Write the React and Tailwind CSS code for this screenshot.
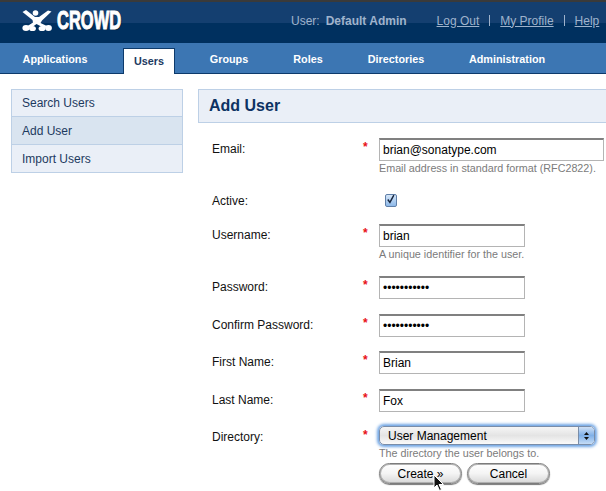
import React from "react";

function Row({ label, required, h, children }) {
  return (
    <div className={`relative flex ${h}`}>
      <div className="w-[167px] pl-[14px] pt-[4px] text-[12px] leading-[15px] text-[#111]">{label}</div>
      <div className="w-[27px] -ml-[2px] pt-[2px] text-[12px] leading-[14px] font-bold text-[#e8101a]">
        <span className={required ? "" : "invisible"}>*</span>
      </div>
      <div className="flex-1 min-w-0 -ml-[11px]">{children}</div>
    </div>
  );
}

const Input = ({ value, wide, password }) => (
  <input
    readOnly
    type={password ? "password" : "text"}
    value={value}
    className={`block h-[23px] ${wide ? "w-[225px]" : "w-[146px]"} border border-[#b4b4b4] border-t-[#808080] border-t-2 bg-white px-[3px] text-[12px] text-black outline-none`}
    style={{ fontFamily: "'Liberation Sans', Arial, sans-serif" }}
  />
);

const Hint = ({ children, className = "" }) => (
  <div className={`text-[10.75px] leading-[14px] text-[#7b7b7b] whitespace-nowrap ${className}`}>{children}</div>
);

const Btn = ({ children }) => (
  <div className="flex h-[21px] w-[83px] items-center justify-center rounded-full border border-[#7c7c7c] bg-gradient-to-b from-white via-[#f4f4f4] to-[#d8d8d8] text-[12px] text-black shadow-[0_1px_1px_#777,inset_0_0_0_1px_#b0b0b0]">
    {children}
  </div>
);

function Tab({ children, className }) {
  return (
    <div className={`flex items-center justify-center text-[10.8px] font-bold text-white ${className}`}>{children}</div>
  );
}

export default function App() {
  return (
    <div
      className="relative h-[491px] w-[606px] overflow-hidden bg-white"
      style={{ fontFamily: "'Liberation Sans', Arial, sans-serif" }}
    >
      {/* header */}
      <div className="h-[2px] bg-[#3a3a3a]" />
      <div className="relative h-[41px] bg-gradient-to-b from-[#143f70] from-50% to-[#00305f] to-50%">
        <div className="flex h-full items-center">
          <div className="ml-[22px] mt-[-4px] h-[22px] w-[32px]">
            <svg viewBox="0 0 32 22" width="32" height="22" fill="#fff">
              <circle cx="13.5" cy="3" r="2.8" />
              <path d="M0.5 2 L4 0 L13 7 L17 7 L26 0.5 L29.5 1.5 L20 10.5 L18.5 13 L27 17 L22 18 L14.5 14 L9 18 L4 17 L11 12.5 L10.5 10 Z" />
              <ellipse cx="4" cy="18" rx="3.6" ry="3" />
              <ellipse cx="10.5" cy="18.5" rx="3.4" ry="2.6" />
              <ellipse cx="20" cy="18.5" rx="3.4" ry="2.6" />
              <ellipse cx="26.5" cy="18" rx="3.4" ry="3" />
            </svg>
          </div>
          <div className="ml-[3px] mt-[-4px] w-[68px] origin-left scale-x-[.66] text-[25px] font-bold leading-[25px] text-white whitespace-nowrap [-webkit-text-stroke:1px_white] [text-shadow:1px_1px_1px_#0a1e38]">
            CROWD
          </div>
          <div className="ml-[166px] mt-[-4px] flex items-center text-[12px] text-[#9fb3cc]">
            <span>User:</span>
            <span className="ml-[6px] font-bold">Default Admin</span>
            <span className="ml-[30px] underline">Log Out</span>
            <span className="mx-[10px] h-[11px] w-px bg-[#9fb3cc]" />
            <span className="underline">My Profile</span>
            <span className="mx-[10px] h-[11px] w-px bg-[#9fb3cc]" />
            <span className="underline">Help</span>
          </div>
        </div>
      </div>

      {/* nav */}
      <div className="flex h-[31px] border-b border-[#0d3a6b] bg-[#3c76b3]">
        <Tab className="ml-[11px] w-[88px] pt-[3px]">Applications</Tab>
        <Tab className="ml-[24px] mt-[5px] h-[26px] w-[52px] border border-b-0 border-[#0d3a6b] bg-white !text-[#1d3a5f]">Users</Tab>
        <Tab className="ml-[23px] w-[62px] pt-[3px]">Groups</Tab>
        <Tab className="ml-[21px] w-[54px] pt-[3px]">Roles</Tab>
        <Tab className="ml-[23px] w-[76px] pt-[3px]">Directories</Tab>
        <Tab className="ml-[28px] w-[90px] pt-[3px]">Administration</Tab>
      </div>

      <div className="flex pt-[15px]">
        {/* sidebar */}
        <div className="ml-[11px] h-[84px] w-[172px] border border-[#bdd0e6] bg-[#eaeff7] text-[12px] text-[#1d3a5f]">
          <div className="flex h-[27px] items-center border-b border-[#bdd0e6] pl-[10px]">Search Users</div>
          <div className="flex h-[28px] items-center border-b border-[#bdd0e6] bg-[#d9e4f0] pl-[10px]">Add User</div>
          <div className="flex h-[27px] items-center pl-[10px]">Import Users</div>
        </div>

        {/* main */}
        <div className="ml-[15px] flex-1">
          <div className="flex h-[34px] items-center border-y border-l border-[#bdd0e6] bg-[#eaeff7] pl-[10px] text-[16px] font-bold text-[#0d3263]">
            Add User
          </div>
          <div className="mt-[15px]">
            <Row label="Email:" required h="h-[52px]">
              <Input value="brian@sonatype.com" wide />
              <Hint>Email address in standard format (RFC2822).</Hint>
            </Row>
            <Row label="Active:" h="h-[34px]">
              <div className="ml-[6px] mt-[4px] flex h-[13px] w-[12px] items-center justify-center rounded-[2px] border border-[#5f7fa8] bg-gradient-to-b from-[#d5e6f8] to-[#8db8e8]">
                <svg width="14" height="15" viewBox="0 0 14 15" className="-mt-[3px]">
                  <path d="M2.5 7.5 L5.5 11.5 L11 1.5" fill="none" stroke="#16243c" strokeWidth="2" />
                </svg>
              </div>
            </Row>
            <Row label="Username:" required h="h-[52px]">
              <Input value="brian" />
              <Hint>A unique identifier for the user.</Hint>
            </Row>
            <Row label="Password:" required h="h-[38px]">
              <Input value="aaaaaaaaaaa" password />
            </Row>
            <Row label="Confirm Password:" required h="h-[37px]">
              <Input value="aaaaaaaaaaa" password />
            </Row>
            <Row label="First Name:" required h="h-[38px]">
              <Input value="Brian" />
            </Row>
            <Row label="Last Name:" required h="h-[37px]">
              <Input value="Fox" />
            </Row>
            <Row label="Directory:" required h="h-[65px]">
              <div className="flex h-[19px] w-[216px] overflow-hidden rounded-[5px] border border-[#7a8da8] bg-gradient-to-b from-[#f6f6f6] via-[#e4e4e4] to-[#fafafa] text-[12px] leading-[18px] text-black shadow-[0_0_3px_2px_#6ea4e4]">
                <span className="flex-1 pl-[8px]">User Management</span>
                <span className="flex w-[16px] flex-col items-center justify-center gap-[2px] border-l border-[#7a8da8] bg-gradient-to-b from-[#cfe0f5] via-[#7fb0e8] to-[#c5dcf6]">
                  <svg width="5" height="3" viewBox="0 0 7 4"><path d="M0 4 L3.5 0 L7 4 Z" fill="#111" /></svg>
                  <svg width="5" height="3" viewBox="0 0 7 4"><path d="M0 0 L3.5 4 L7 0 Z" fill="#111" /></svg>
                </span>
              </div>
              <Hint className="mt-[1px]">The directory the user belongs to.</Hint>
              <div className="mt-[3px] flex gap-[5px]">
                <Btn>Create »</Btn>
                <Btn>Cancel</Btn>
              </div>
            </Row>
          </div>
        </div>
      </div>

      {/* mouse pointer */}
      <svg className="absolute left-[433px] top-[474px]" width="12" height="18" viewBox="0 0 12 18">
        <path d="M1 1 L1 14 L4 11 L6.5 16.5 L8.5 15.5 L6 10.5 L10.5 10.5 Z" fill="#111" stroke="#fff" strokeWidth="1" />
      </svg>
    </div>
  );
}
